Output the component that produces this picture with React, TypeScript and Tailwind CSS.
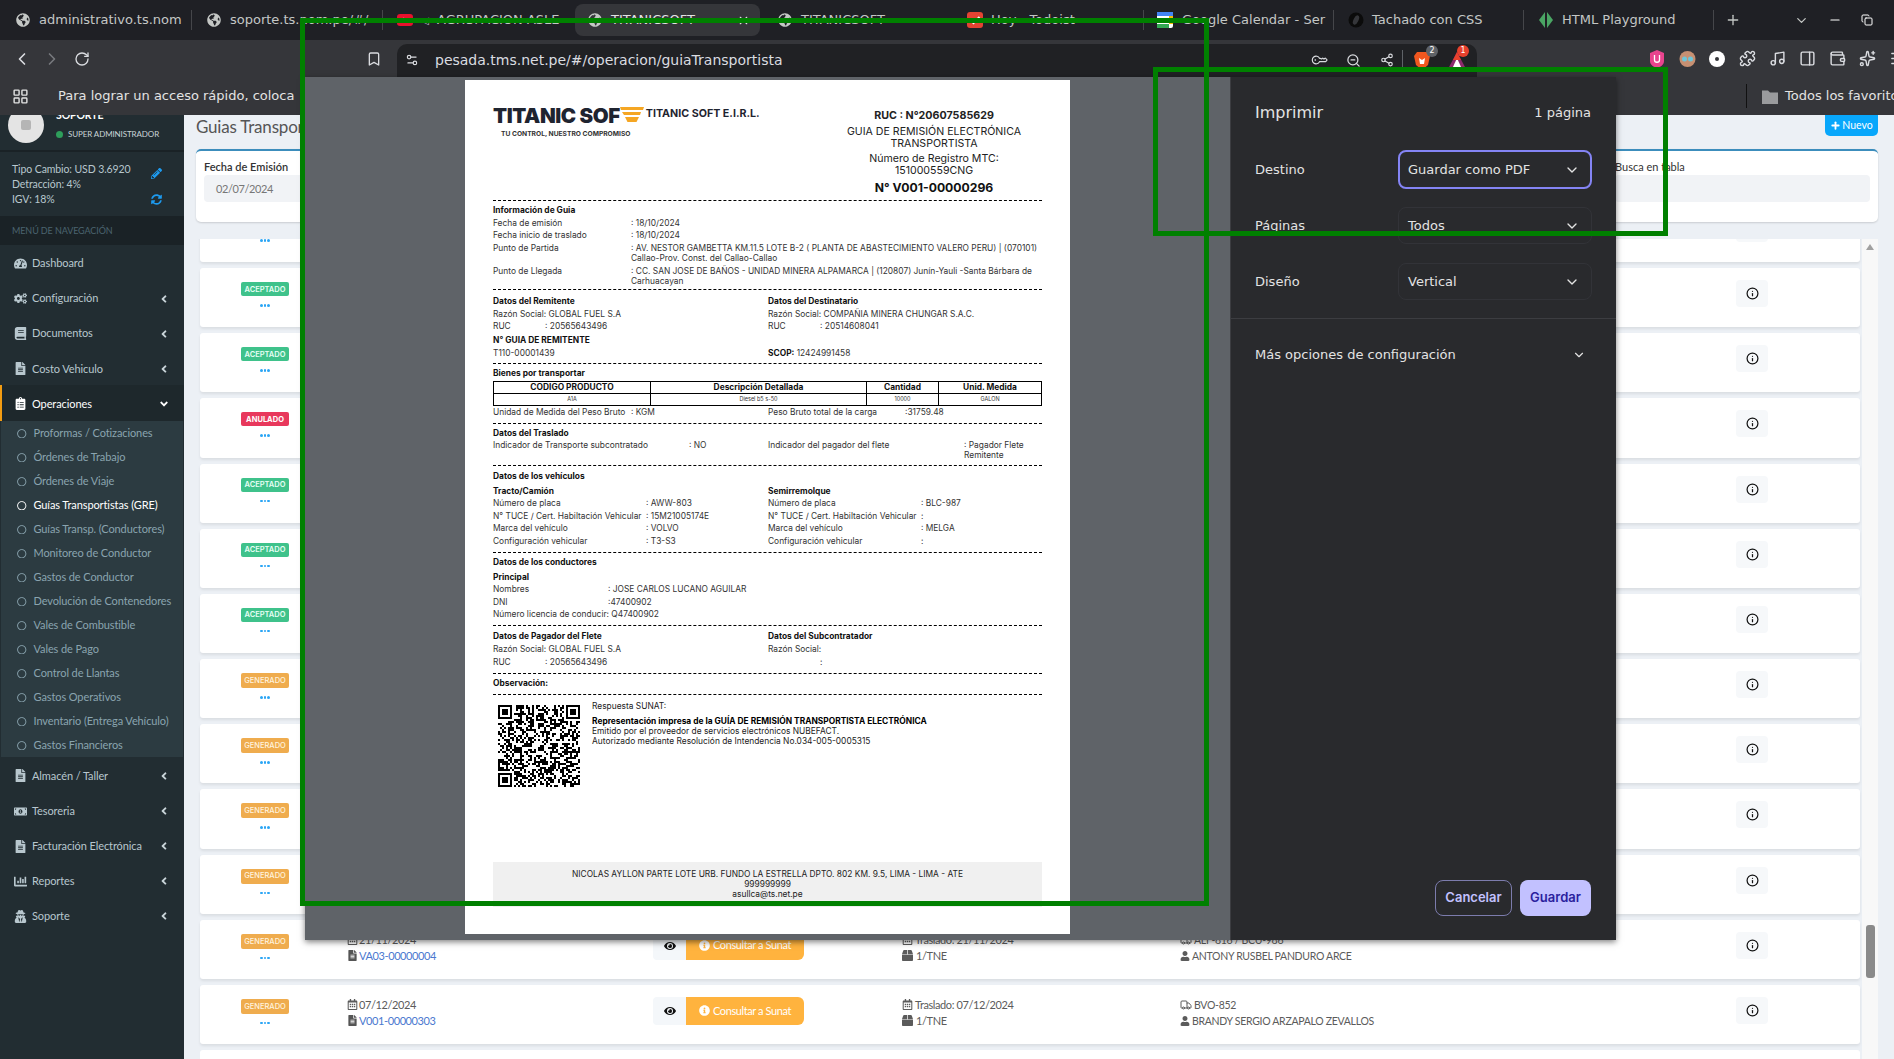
import { ReactNode } from "react";
import {
  Bookmark,
  ChevronDown,
  ChevronLeft,
  ChevronRight,
  Copy,
  Info,
  KeyRound,
  LayoutGrid,
  Menu,
  Minus,
  Music,
  PanelRight,
  Plus,
  Puzzle,
  RotateCw,
  Settings2,
  Share2,
  Sparkles,
  Truck,
  Wallet,
  X,
  ZoomOut,
} from "lucide-react";
import {
  FaAngleDown,
  FaAngleLeft,
  FaBook,
  FaBox,
  FaChartBar,
  FaClipboardList,
  FaCogs,
  FaEye,
  FaFileAlt,
  FaGlobeAmericas,
  FaInfoCircle,
  FaMoneyBillAlt,
  FaPencilAlt,
  FaRegCalendarAlt,
  FaRegCircle,
  FaSyncAlt,
  FaTachometerAlt,
  FaUser,
  FaUserSecret,
} from "react-icons/fa";

const Globe = () => <FaGlobeAmericas className="text-[#c4c7c5] text-[14px] shrink-0" />;

const TabSep = () => <div className="w-px h-[20px] bg-[#45464a] shrink-0" />;

// browser tabs strip
const TabStrip = () => (
  <div className="flex items-center h-[40px] bg-[#1f2025] text-[#c4c7c5] text-[13px] font-['DejaVu_Sans',sans-serif] overflow-hidden whitespace-nowrap shrink-0">
    <div className="w-[16px] shrink-0" />
    <div className="flex items-center gap-[9px] w-[175px] overflow-hidden shrink-0">
      <Globe />
      <span>administrativo.ts.nom</span>
    </div>
    <TabSep />
    <div className="flex items-center gap-[9px] w-[190px] pl-[15px] overflow-hidden shrink-0">
      <Globe />
      <span>soporte.ts.nom.pe/#/</span>
    </div>
    <TabSep />
    <div className="flex items-center w-[192px] pl-[14px] overflow-hidden shrink-0">
      <svg width="16" height="14" viewBox="0 0 16 14" className="shrink-0">
        <rect width="16" height="12" y="1" rx="3" fill="#e8112d" />
        <path d="M6.5 4.5v5l4-2.500z" fill="#fff" />
      </svg>
      <span className="w-[24px] text-[10px] text-center shrink-0">◁</span>
      <span>AGRUPACION ASLE</span>
    </div>
    <div className="flex items-center gap-[9px] w-[185px] h-[32px] pl-[13px] pr-[10px] bg-[#35363a] rounded-[8px] text-[#e3e3e3] shrink-0">
      <Globe />
      <span>TITANICSOFT</span>
      <X size={13} className="ml-auto" />
    </div>
    <div className="flex items-center gap-[9px] w-[199px] pl-[18px] shrink-0">
      <Globe />
      <span>TITANICSOFT</span>
    </div>
    <div className="flex items-center gap-[8px] w-[184px] pl-[8px] shrink-0">
      <svg width="16" height="16" viewBox="0 0 16 16" className="shrink-0">
        <rect width="16" height="16" rx="3" fill="#e44332" />
        <path d="M3.500 8l3 3 6-6" stroke="#fff" strokeWidth="2" fill="none" />
      </svg>
      <span>Hoy - Todoist</span>
    </div>
    <TabSep />
    <div className="flex items-center gap-[9px] w-[189px] pl-[13px] overflow-hidden shrink-0">
      <svg width="16" height="16" viewBox="0 0 16 16" className="shrink-0">
        <rect width="16" height="16" rx="2" fill="#fff" />
        <path d="M0 0h16v4H0z" fill="#4285f4" />
        <path d="M0 12h12v4H0z" fill="#34a853" />
        <path d="M12 4h4v8h-4z" fill="#fbbc04" />
      </svg>
      <span>Google Calendar - Ser</span>
    </div>
    <TabSep />
    <div className="flex items-center gap-[8px] w-[189px] pl-[14px] shrink-0">
      <svg width="16" height="16" viewBox="0 0 16 16" className="shrink-0">
        <circle cx="8" cy="8" r="7.500" fill="#0b0b0b" />
        <ellipse cx="8" cy="8" rx="2.500" ry="5" fill="#35363a" transform="rotate(25 8 8)" />
      </svg>
      <span>Tachado con CSS</span>
    </div>
    <TabSep />
    <div className="flex items-center gap-[8px] w-[189px] pl-[14px] shrink-0">
      <svg width="16" height="18" viewBox="0 0 16 18" className="shrink-0">
        <path d="M7 1L1 9l6 8zM9 1l6 8-6 8z" fill="#4aa564" />
      </svg>
      <span>HTML Playground</span>
    </div>
    <TabSep />
    <Plus size={16} className="ml-[11px] shrink-0" />
    <ChevronDown size={15} className="ml-[53px] shrink-0" />
    <Minus size={14} className="ml-[19px] shrink-0 text-white" />
    <Copy size={12} className="ml-[19px] shrink-0 text-white" />
  </div>
);

const ToolIcon = ({ children }: { children: ReactNode }) => (
  <div className="w-[30px] flex justify-center items-center shrink-0 text-[#dadce0]">{children}</div>
);

const Toolbar = () => (
  <div className="flex items-center h-[37px] pl-[7px] bg-[#35363a] overflow-hidden shrink-0">
    <ToolIcon>
      <ChevronLeft size={20} />
    </ToolIcon>
    <ToolIcon>
      <ChevronRight size={20} className="text-[#77797d]" />
    </ToolIcon>
    <ToolIcon>
      <RotateCw size={16} />
    </ToolIcon>
    <div className="w-[262px] shrink-0" />
    <ToolIcon>
      <Bookmark size={16} />
    </ToolIcon>
    <div className="flex items-center ml-[8px] w-[1080px] h-[33px] mt-[3px] pl-[8px] pr-[8px] bg-[#202124] rounded-t-[10px] text-[#dadce0] text-[14px] font-['DejaVu_Sans',sans-serif] shrink-0">
      <Settings2 size={14} className="shrink-0" />
      <span className="ml-[16px]">pesada.tms.net.pe/#/operacion/guiaTransportista</span>
      <div className="ml-auto flex items-center">
        <KeyRound size={14} className="mr-[20px] rotate-[-135deg]" />
        <ZoomOut size={15} className="mr-[19px]" />
        <Share2 size={14} className="mr-[8px]" />
        <div className="w-px h-[20px] bg-[#5f6368] mr-[11px]" />
        <div className="relative mr-[18px]">
          <svg width="16" height="19" viewBox="0 0 16 19">
            <path d="M3 1h10l3 4-2 9-6 5-6-5-2-9z" fill="#f1571f" />
            <path d="M5 7l3 2 3-2-1 6H6z" fill="#fff" />
          </svg>
          <span className="absolute -top-[6px] -right-[8px] w-[12px] h-[12px] rounded-full bg-[#5f6368] text-[8px] leading-[12px] text-center text-white">
            2
          </span>
        </div>
        <div className="relative mr-[3px]">
          <svg width="18" height="17" viewBox="0 0 18 17">
            <path d="M9 0l9 17H0z" fill="#8c2a6c" />
            <path d="M9 6l4 9H5z" fill="#fff" />
            <path d="M9 0l4 8H5z" fill="#e8412d" />
          </svg>
          <span className="absolute -top-[7px] -right-[3px] w-[12px] h-[12px] rounded-full bg-[#e8412d] text-[8px] leading-[12px] text-center text-white">
            1
          </span>
        </div>
      </div>
    </div>
    <div className="w-[165px] shrink-0" />
    <ToolIcon>
      <svg width="16" height="18" viewBox="0 0 16 18">
        <path d="M8 0l7 3v8c0 4-4 6-7 7-3-1-7-3-7-7V3z" fill="#e9448e" />
        <path d="M5.500 5v5c0 3 5 3 5 0V5" stroke="#fff" strokeWidth="1.300" fill="none" />
      </svg>
    </ToolIcon>
    <ToolIcon>
      <svg width="17" height="18" viewBox="0 0 17 18">
        <circle cx="8.500" cy="9" r="8" fill="#c79072" />
        <circle cx="5.500" cy="9" r="2.500" fill="#6ec6d8" />
        <circle cx="11.500" cy="9" r="2.500" fill="#6ec6d8" />
      </svg>
    </ToolIcon>
    <ToolIcon>
      <svg width="16" height="16" viewBox="0 0 16 16">
        <circle cx="8" cy="8" r="8" fill="#fff" />
        <circle cx="8" cy="8" r="2" fill="#35363a" />
      </svg>
    </ToolIcon>
    <ToolIcon>
      <Puzzle size={17} />
    </ToolIcon>
    <ToolIcon>
      <Music size={17} />
    </ToolIcon>
    <ToolIcon>
      <PanelRight size={17} />
    </ToolIcon>
    <ToolIcon>
      <Wallet size={17} />
    </ToolIcon>
    <ToolIcon>
      <Sparkles size={17} />
    </ToolIcon>
    <ToolIcon>
      <Menu size={17} />
    </ToolIcon>
  </div>
);

const BookmarksBar = () => (
  <div className="flex items-center h-[38px] pl-[12px] bg-[#35363a] text-[#e3e3e3] text-[13px] font-['DejaVu_Sans',sans-serif] whitespace-nowrap overflow-hidden shrink-0">
    <LayoutGrid size={17} className="shrink-0" />
    <span className="ml-[29px] w-[1701px] shrink-0">Para lograr un acceso rápido, coloca</span>
    <div className="w-px h-[24px] bg-[#111] -ml-[13px] shrink-0" />
    <svg width="16" height="15" viewBox="0 0 16 15" className="ml-[15px] shrink-0">
      <path d="M0 1.500h6l2 2h8V15H0z" fill="#9a9b9d" />
    </svg>
    <span className="ml-[7px] shrink-0">Todos los favoritos</span>
  </div>
);

const mainMenuTop = [
  { label: "Dashboard", icon: <FaTachometerAlt />, arrow: false },
  { label: "Configuración", icon: <FaCogs />, arrow: true },
  { label: "Documentos", icon: <FaBook />, arrow: true },
  { label: "Costo Vehiculo", icon: <FaFileAlt />, arrow: true },
];

const mainMenuBottom = [
  { label: "Almacén / Taller", icon: <FaFileAlt /> },
  { label: "Tesoreria", icon: <FaMoneyBillAlt /> },
  { label: "Facturación Electrónica", icon: <FaFileAlt /> },
  { label: "Reportes", icon: <FaChartBar /> },
  { label: "Soporte", icon: <FaUserSecret /> },
];

const subMenu = [
  "Proformas / Cotizaciones",
  "Órdenes de Trabajo",
  "Órdenes de Viaje",
  "Guías Transportistas (GRE)",
  "Guías Transp. (Conductores)",
  "Monitoreo de Conductor",
  "Gastos de Conductor",
  "Devolución de Contenedores",
  "Vales de Combustible",
  "Vales de Pago",
  "Control de Llantas",
  "Gastos Operativos",
  "Inventario (Entrega Vehículo)",
  "Gastos Financieros",
];

const MenuItem = ({ label, icon, arrow }: { label: string; icon: ReactNode; arrow: boolean }) => (
  <div className="flex items-center h-[35.100px] pt-[2px] pl-[14px] pr-[14px] text-[#b8c7ce]">
    <span className="w-[18px] text-[13px] flex shrink-0">{icon}</span>
    <span>{label}</span>
    {arrow && <FaAngleLeft className="ml-auto text-[12px] text-[#c8d3d8]" />}
  </div>
);

const Sidebar = () => (
  <aside className="w-[184px] shrink-0 bg-[#222d32] text-[11px] tracking-[-0.1px] font-['Lato',sans-serif] overflow-hidden whitespace-nowrap">
    <div className="flex h-[35px] pl-[8px]">
      <div className="w-[36px] h-[36px] -mt-[8px] rounded-full bg-[#e4e4e4] flex items-center justify-center shrink-0">
        <div className="w-[10px] h-[10px] bg-[#b5b5b5] rounded-[2px]" />
      </div>
      <div className="ml-[12px] -mt-[7px] text-white">
        <div className="text-[10.500px] font-bold leading-[14px]">SOPORTE</div>
        <div className="flex items-center gap-[5px] mt-[6px] text-[8px] text-[#c9d3d7]">
          <span className="w-[7px] h-[7px] rounded-full bg-[#2e9e5b]" />
          SUPER ADMINISTRADOR
        </div>
      </div>
    </div>
    <div className="h-[2px] bg-[#1a2226]" />
    <div className="flex justify-between h-[64px] pl-[12px] pr-[22px] pt-[10px] text-[#b8c7ce] text-[10.500px] leading-[15px]">
      <div>
        <div>Tipo Cambio: USD 3.6920</div>
        <div>Detracción: 4%</div>
        <div>IGV: 18%</div>
      </div>
      <div className="flex flex-col items-center gap-[15px] pt-[6px] text-[#1d9bf0] text-[11px]">
        <FaPencilAlt />
        <FaSyncAlt />
      </div>
    </div>
    <div className="flex items-center h-[29px] pl-[12px] bg-[#1a2226] text-[#4b646f] text-[9px]">
      MENÚ DE NAVEGACIÓN
    </div>
    {mainMenuTop.map((m) => (
      <MenuItem key={m.label} {...m} />
    ))}
    <div className="flex items-center h-[36px] pt-[1px] pl-[12px] pr-[14px] bg-[#1e282c] border-l-[2px] border-[#f39c12] text-white">
      <span className="w-[18px] text-[13px] flex shrink-0">
        <FaClipboardList />
      </span>
      <span>Operaciones</span>
      <FaAngleDown className="ml-auto text-[12px]" />
    </div>
    <div className="ml-px mr-px bg-[#2c3b41]">
      {subMenu.map((s) => (
        <div
          key={s}
          className={`flex items-center h-[24px] pl-[16px] ${s.startsWith("Guías Transportistas") ? "text-white" : "text-[#8aa4af]"}`}
        >
          <FaRegCircle className="text-[9.500px] mr-[7px] shrink-0" />
          {s}
        </div>
      ))}
    </div>
    {mainMenuBottom.map((m) => (
      <MenuItem key={m.label} {...m} arrow />
    ))}
  </aside>
);

type RowData = {
  status: "ACEPTADO" | "ANULADO" | "GENERADO";
  date?: string;
  doc?: string;
  traslado?: string;
  vehicle?: string;
  driver?: string;
};

const rows: RowData[] = [
  { status: "ACEPTADO" },
  { status: "ACEPTADO" },
  { status: "ACEPTADO" },
  { status: "ANULADO" },
  { status: "ACEPTADO" },
  { status: "ACEPTADO" },
  { status: "ACEPTADO" },
  { status: "GENERADO" },
  { status: "GENERADO" },
  { status: "GENERADO" },
  { status: "GENERADO" },
  {
    status: "GENERADO",
    date: "21/11/2024",
    doc: "VA03-00000004",
    traslado: "Traslado: 21/11/2024",
    vehicle: "ALF-816 / BCU-986",
    driver: "ANTONY RUSBEL PANDURO ARCE",
  },
  {
    status: "GENERADO",
    date: "07/12/2024",
    doc: "V001-00000303",
    traslado: "Traslado: 07/12/2024",
    vehicle: "BVO-852",
    driver: "BRANDY SERGIO ARZAPALO ZEVALLOS",
  },
];

const badgeClass = {
  ACEPTADO: "bg-[#3fc28b] text-[#e8fff5] h-[14px] font-semibold",
  ANULADO: "bg-[#e8385c] text-white h-[14px] font-bold",
  GENERADO: "bg-[#efac4e] text-[#fff3df] h-[15px] font-medium",
};

const Row = ({ row }: { row: RowData }) => (
  <div className="flex items-start h-[59.170px] bg-white rounded-[3px] shadow-[0_2px_3px_rgba(0,0,0,0.08)] text-[11px] tracking-[-0.4px] text-[#5b5b5b] font-['Lato',sans-serif] whitespace-nowrap shrink-0">
    <div className="w-[130px] pt-[14px] flex flex-col items-center gap-[8px] tracking-normal shrink-0">
      <div
        className={`w-[48px] rounded-[2px] flex items-center justify-center text-[7.500px] font-['Inter',sans-serif] ${badgeClass[row.status]}`}
      >
        {row.status}
      </div>
      <div className="flex gap-[1px]">
        <span className="w-[2.500px] h-[2.500px] rounded-full bg-[#2aa5f5]" />
        <span className="w-[2.500px] h-[2.500px] rounded-full bg-[#2aa5f5]" />
        <span className="w-[2.500px] h-[2.500px] rounded-full bg-[#2aa5f5]" />
      </div>
    </div>
    <div className="w-[323px] pl-[17px] pt-[12px] leading-[16px] shrink-0">
      {row.date && (
        <>
          <div className="flex items-center gap-[1px]">
            <FaRegCalendarAlt className="text-[11px]" />
            {row.date}
          </div>
          <div className="flex items-center gap-[1px] text-[#4a78cf]">
            <FaFileAlt className="text-[11px] text-[#555]" />
            {row.doc}
          </div>
        </>
      )}
    </div>
    <div className="w-[249px] pt-[12px] shrink-0">
      {row.date && (
        <div className="flex h-[28px] w-[151px]">
          <div className="w-[33px] flex items-center justify-center bg-[#f4f7fa] rounded-l-[4px] text-[#111] text-[12px]">
            <FaEye />
          </div>
          <div className="flex-1 flex items-center justify-center gap-[3px] bg-[#ffb33e] rounded-r-[6px] text-white">
            <FaInfoCircle className="text-[11px]" />
            Consultar a Sunat
          </div>
        </div>
      )}
    </div>
    <div className="w-[278px] pt-[12px] leading-[16px] shrink-0">
      {row.traslado && (
        <>
          <div className="flex items-center gap-[2px]">
            <FaRegCalendarAlt className="text-[11px]" />
            {row.traslado}
          </div>
          <div className="flex items-center gap-[3px]">
            <FaBox className="text-[11px]" />
            1/TNE
          </div>
        </>
      )}
    </div>
    <div className="w-[556px] pt-[12px] leading-[16px] text-[10.500px] tracking-[-0.3px] shrink-0">
      {row.vehicle && (
        <>
          <div className="flex items-center gap-[2px]">
            <Truck size={12} />
            {row.vehicle}
          </div>
          <div className="flex items-center gap-[2px]">
            <FaUser className="text-[10px]" />
            {row.driver}
          </div>
        </>
      )}
    </div>
    <div className="w-[32px] h-[27px] mt-[12px] flex items-center justify-center bg-[#f6f8fa] rounded-[4px] text-[#111] shrink-0">
      <Info size={13} strokeWidth={2.250} />
    </div>
  </div>
);

const Content = () => (
  <main className="flex-1 min-w-0 pl-[12px] pr-[16px] bg-[#ecf0f5] font-['Lato',sans-serif] flex flex-col overflow-hidden">
    <div className="flex justify-between h-[34px] shrink-0">
      <h1 className="text-[17px] leading-[24px] tracking-[-0.2px] text-[#555]">Guias Transportistas</h1>
      <button className="flex items-center justify-center gap-[1px] w-[53px] h-[21px] bg-[#08a7fb] rounded-b-[5px] text-white text-[10.500px]">
        <Plus size={11} strokeWidth={4} />
        Nuevo
      </button>
    </div>
    <div className="flex justify-between h-[73px] px-[8px] pt-[9px] bg-white border-t-[2px] border-[#3c8dbc] rounded-[5px] shadow-[0_1px_2px_rgba(0,0,0,0.15)] text-[11px] text-[#333] shrink-0">
      <div className="w-[220px]">
        <div className="font-semibold leading-[14px]">Fecha de Emisión</div>
        <div className="h-[27px] mt-[1px] pl-[12px] leading-[27px] tracking-[-0.4px] bg-[#f1f3f6] rounded-[4px] text-[#777]">02/07/2024</div>
      </div>
      <div className="w-[255px]">
        <div className="leading-[14px]">Busca en tabla</div>
        <div className="h-[27px] mt-[1px] bg-[#f1f3f6] rounded-[4px]" />
      </div>
    </div>
    <div className="flex flex-1 min-h-0 mt-[17px] overflow-hidden">
      <div className="flex flex-col gap-[6px] w-[1660px] ml-[4px] -mt-[36px] shrink-0">
        {rows.map((r, i) => (
          <Row key={i} row={r} />
        ))}
        <div className="h-[59px] bg-white rounded-[3px] shrink-0" />
      </div>
      <div className="flex flex-col items-center w-[16px] ml-[2px] pt-[5px] bg-[#f8f8f8] shrink-0">
        <div className="w-0 h-0 border-x-[4px] border-x-transparent border-b-[6px] border-b-[#a0a0a0]" />
        <div className="w-[9px] h-[53px] mt-[675px] bg-[#8a8a8a] rounded-[3px]" />
      </div>
    </div>
  </main>
);

// deterministic fake QR modules so it looks dense like the printed one
const qrPath = (() => {
  const n = 41;
  let seed = 20607585;
  let d = "";
  const finder = (x: number, y: number) =>
    `M${x} ${y}h7v7h-7zM${x + 1} ${y + 1}v5h5v-5zM${x + 2} ${y + 2}h3v3h-3z`;
  for (let y = 0; y < n; y++) {
    for (let x = 0; x < n; x++) {
      seed = (seed * 1103515245 + 12345) & 0x7fffffff;
      const inFinder = (x < 8 && y < 8) || (x > n - 9 && y < 8) || (x < 8 && y > n - 9);
      if (!inFinder && (seed >> 16) % 2 === 0) d += `M${x} ${y}h1v1h-1z`;
    }
  }
  return d + finder(0, 0) + finder(n - 7, 0) + finder(0, n - 7);
})();

const QrCode = () => (
  <svg width="82" height="83" viewBox="0 0 41 41" className="shrink-0" shapeRendering="crispEdges">
    <path d={qrPath} fillRule="evenodd" fill="#000" />
  </svg>
);

const H = ({ children }: { children: ReactNode }) => (
  <div className="h-[12.500px] leading-[12.500px] font-bold text-[#111]">{children}</div>
);

// single label / value line of the document
const KV = ({ label, value, w }: { label: string; value: string; w: string }) => (
  <div className="flex h-[12.500px] leading-[12.500px]">
    <span className={`${w} shrink-0`}>{label}</span>
    <span>{value}</span>
  </div>
);

const Section = ({ className, children }: { className: string; children: ReactNode }) => (
  <div className={`border-t border-dashed border-black ${className}`}>{children}</div>
);

const Doc = () => (
  <div className="w-[605px] h-[854px] ml-[160px] mt-[3px] px-[28px] bg-white text-[8.400px] text-[#333] font-['Inter',sans-serif] whitespace-nowrap overflow-hidden shrink-0">
    <div className="flex h-[120px]">
      <div className="w-[333px] pt-[25px]">
        <div className="flex items-center h-[22px]">
          <span className="text-[20.500px] leading-[22px] font-black tracking-[-0.4px] text-[#1f2430]">TITANIC SOF</span>
          <svg width="24" height="15" viewBox="0 0 24 15" className="shrink-0 mt-[-3px]">
            <path d="M0 0h24l-1 3H1zM2 5h19l-1 3H4zM5 10h14l-2.500 5h-9z" fill="#f5a623" />
          </svg>
          <span className="ml-[2px] -mt-[3px] text-[10.700px] font-bold text-[#1f2430]">TITANIC SOFT E.I.R.L.</span>
        </div>
        <div className="mt-[3px] ml-[8px] text-[6.700px] leading-[8px] font-bold text-[#333]">TU CONTROL, NUESTRO COMPROMISO</div>
      </div>
      <div className="w-[216px] pt-[30px] text-center text-[10.600px] text-[#222]">
        <div className="h-[12px] leading-[12px] text-[10.700px] font-bold">RUC : N°20607585629</div>
        <div className="mt-[4px] leading-[12px]">GUIA DE REMISIÓN ELECTRÓNICA</div>
        <div className="leading-[12px]">TRANSPORTISTA</div>
        <div className="mt-[3px] leading-[12px]">Número de Registro MTC:</div>
        <div className="leading-[12px]">151000559CNG</div>
        <div className="mt-[4px] leading-[14px] text-[12.200px] font-bold text-[#111]">N° V001-00000296</div>
      </div>
    </div>

    <Section className="pt-[3px] pb-[1.500px]">
      <H>Información de Guia</H>
      <KV label="Fecha de emisión" value=": 18/10/2024" w="w-[138px]" />
      <KV label="Fecha inicio de traslado" value=": 18/10/2024" w="w-[138px]" />
      <div className="flex py-[1px] leading-[10.500px]">
        <span className="w-[138px] shrink-0">Punto de Partida</span>
        <span>
          : AV. NESTOR GAMBETTA KM.11.5 LOTE B-2 ( PLANTA DE ABASTECIMIENTO VALERO PERU) | (070101)
          <br />
          Callao-Prov. Const. del Callao-Callao
        </span>
      </div>
      <div className="flex py-[1px] leading-[10.500px]">
        <span className="w-[138px] shrink-0">Punto de Llegada</span>
        <span>
          : CC. SAN JOSE DE BAÑOS - UNIDAD MINERA ALPAMARCA | (120807) Junín-Yauli -Santa Bárbara de
          <br />
          Carhuacayan
        </span>
      </div>
    </Section>

    <Section className="flex pt-[5px] pb-[4px]">
      <div className="w-[275px] shrink-0">
        <H>Datos del Remitente</H>
        <div className="h-[12.500px] leading-[12.500px]">Razón Social: GLOBAL FUEL S.A</div>
        <KV label="RUC" value=": 20565643496" w="w-[52px]" />
        <div className="mt-[1.500px]">
          <H>N° GUIA DE REMITENTE</H>
        </div>
        <div className="h-[12.500px] leading-[12.500px]">T110-00001439</div>
      </div>
      <div>
        <H>Datos del Destinatario</H>
        <div className="h-[12.500px] leading-[12.500px]">Razón Social: COMPAÑIA MINERA CHUNGAR S.A.C.</div>
        <KV label="RUC" value=": 20514608041" w="w-[52px]" />
        <div className="mt-[14px] h-[12.500px] leading-[12.500px]">
          <b className="text-[#111]">SCOP:</b> 12424991458
        </div>
      </div>
    </Section>

    <Section className="pt-[3px] pb-[4.500px]">
      <H>Bienes por transportar</H>
      <div className="mt-[1.500px] border border-black">
        <div className="flex h-[12px] leading-[11px] border-b border-black font-bold text-center text-[#111]">
          <div className="w-[157px] border-r border-black">CODIGO PRODUCTO</div>
          <div className="w-[216px] border-r border-black">Descripción Detallada</div>
          <div className="w-[72px] border-r border-black">Cantidad</div>
          <div className="flex-1">Unid. Medida</div>
        </div>
        <div className="flex h-[11px] leading-[11px] text-center text-[5.500px]">
          <div className="w-[157px] border-r border-black">A1A</div>
          <div className="w-[216px] border-r border-black">Diesel b5 s-50</div>
          <div className="w-[72px] border-r border-black">10000</div>
          <div className="flex-1">GALON</div>
        </div>
      </div>
      <div className="flex">
        <div className="w-[275px] shrink-0">
          <KV label="Unidad de Medida del Peso Bruto" value=": KGM" w="w-[138px]" />
        </div>
        <KV label="Peso Bruto total de la carga" value=":31759.48" w="w-[137px]" />
      </div>
    </Section>

    <Section className="pt-[3px] pb-[4px]">
      <H>Datos del Traslado</H>
      <div className="flex leading-[10.500px]">
        <span className="w-[196px] shrink-0">Indicador de Transporte subcontratado</span>
        <span className="w-[79px] shrink-0">: NO</span>
        <span className="w-[196px] shrink-0">Indicador del pagador del flete</span>
        <span>
          : Pagador Flete
          <br />
          Remitente
        </span>
      </div>
    </Section>

    <Section className="pt-[4px] pb-[4.500px]">
      <H>Datos de los vehículos</H>
      <div className="flex mt-[2.500px]">
        <div className="w-[275px] shrink-0">
          <H>Tracto/Camión</H>
          <KV label="Número de placa" value=": AWW-803" w="w-[153px]" />
          <KV label="N° TUCE / Cert. Habiltación Vehicular" value=": 15M21005174E" w="w-[153px]" />
          <KV label="Marca del vehículo" value=": VOLVO" w="w-[153px]" />
          <KV label="Configuración vehicular" value=": T3-S3" w="w-[153px]" />
        </div>
        <div>
          <H>Semirremolque</H>
          <KV label="Número de placa" value=": BLC-987" w="w-[153px]" />
          <KV label="N° TUCE / Cert. Habiltación Vehicular" value=":" w="w-[153px]" />
          <KV label="Marca del vehículo" value=": MELGA" w="w-[153px]" />
          <KV label="Configuración vehicular" value=":" w="w-[153px]" />
        </div>
      </div>
    </Section>

    <Section className="pt-[3px] pb-[4px]">
      <H>Datos de los conductores</H>
      <div className="mt-[2.500px]">
        <H>Principal</H>
      </div>
      <KV label="Nombres" value=": JOSE CARLOS LUCANO AGUILAR" w="w-[115px]" />
      <KV label="DNI" value=":47400902" w="w-[115px]" />
      <div className="h-[12.500px] leading-[12.500px]">Número licencia de conducir: Q47400902</div>
    </Section>

    <Section className="flex pt-[4px] pb-[4.500px]">
      <div className="w-[275px] shrink-0">
        <H>Datos de Pagador del Flete</H>
        <div className="mt-[1px] h-[12.500px] leading-[12.500px]">Razón Social: GLOBAL FUEL S.A</div>
        <KV label="RUC" value=": 20565643496" w="w-[52px]" />
      </div>
      <div>
        <H>Datos del Subcontratador</H>
        <div className="mt-[1px] h-[12.500px] leading-[12.500px]">Razón Social:</div>
        <KV label="" value=":" w="w-[52px]" />
      </div>
    </Section>

    <Section className="pt-[3px] pb-[4.500px]">
      <H>Observación:</H>
    </Section>

    <Section className="flex h-[168px] pt-[9px] pl-[5px]">
      <QrCode />
      <div className="ml-[12px] -mt-[3px] leading-[10px] text-[#222]">
        <div>Respuesta SUNAT:</div>
        <div className="mt-[5px] font-bold text-[#000]">Representación impresa de la GUÍA DE REMISIÓN TRANSPORTISTA ELECTRÓNICA</div>
        <div>Emitido por el proveedor de servicios electrónicos NUBEFACT.</div>
        <div>Autorizado mediante Resolución de Intendencia No.034-005-0005315</div>
      </div>
    </Section>

    <div className="h-[45px] pt-[7px] bg-[#f0f0f0] text-center leading-[10px] text-[#222]">
      <div>NICOLAS AYLLON PARTE LOTE URB. FUNDO LA ESTRELLA DPTO. 802 KM. 9.5, LIMA - LIMA - ATE</div>
      <div>999999999</div>
      <div>asullca@ts.net.pe</div>
    </div>
  </div>
);

const PanelSelect = ({ label, value, focused, className }: { label: string; value: string; focused?: boolean; className: string }) => (
  <div className={`flex items-center ${className}`}>
    <span className="w-[143px] shrink-0">{label}</span>
    <div
      className={`flex items-center justify-between flex-1 h-full rounded-[8px] border ${focused ? "border-2 border-[#8484f4] pl-[8px] pr-[10px]" : "border-[#323338] pl-[9px] pr-[11px]"}`}
    >
      {value}
      <ChevronDown size={16} />
    </div>
  </div>
);

const PrintPanel = () => (
  <div className="flex flex-col w-[386px] h-full bg-[#292a2d] border-l border-[#3c3d41] text-[13px] text-[#e3e3e3] font-['DejaVu_Sans',sans-serif] whitespace-nowrap shrink-0">
    <div className="flex items-center justify-between h-[30px] mt-[21px] pl-[24px] pr-[25px]">
      <span className="text-[16px]">Imprimir</span>
      <span>1 página</span>
    </div>
    <div className="pl-[24px] pr-[24px]">
      <PanelSelect label="Destino" value="Guardar como PDF" focused className="h-[39px] mt-[22px]" />
      <PanelSelect label="Páginas" value="Todos" className="h-[37px] mt-[18px]" />
      <PanelSelect label="Diseño" value="Vertical" className="h-[37px] mt-[19px]" />
    </div>
    <div className="flex items-center justify-between h-[73px] mt-[18px] pl-[24px] pr-[30px] border-t border-[#3c3d41]">
      Más opciones de configuración
      <ChevronDown size={14} />
    </div>
    <div className="flex justify-end gap-[8px] mt-auto mb-[24px] px-[25px] text-[13px] font-semibold font-['Inter',sans-serif]">
      <button className="w-[77px] h-[36px] border border-[#7c7cad] rounded-[8px] text-[#c2c1ff]">Cancelar</button>
      <button className="w-[71px] h-[36px] bg-[#c2c1ff] rounded-[8px] text-[#2b1f9e]">Guardar</button>
    </div>
  </div>
);

export default function App() {
  return (
    <div className="relative flex flex-col w-[1894px] h-[1059px] overflow-hidden">
      <TabStrip />
      <Toolbar />
      <BookmarksBar />
      <div className="flex flex-1 min-h-0">
        <Sidebar />
        <Content />
      </div>

      {/* print preview dialog */}
      <div className="absolute left-[305px] top-[77px] flex w-[1311px] h-[863px] bg-[#5f6368] shadow-[0_2px_6px_rgba(0,0,0,0.5)]">
        <div className="flex-1 min-w-0 overflow-hidden">
          <Doc />
        </div>
        <PrintPanel />
      </div>

      {/* green annotation boxes */}
      <div className="absolute left-[300px] top-[18px] w-[909px] h-[888px] border-[5px] border-[#008000]" />
      <div className="absolute left-[1153px] top-[67px] w-[515px] h-[169px] border-[5px] border-[#008000]" />
    </div>
  );
}
